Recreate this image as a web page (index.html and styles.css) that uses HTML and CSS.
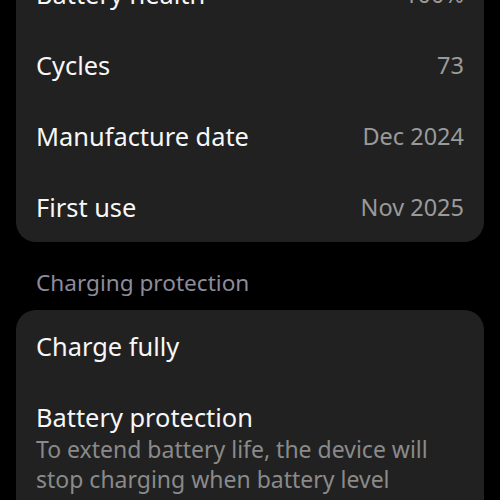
FILE: index.html
```html
<!DOCTYPE html>
<html lang="en">
<head>
  <meta charset="UTF-8">
  <meta name="viewport" content="width=device-width, initial-scale=1.0">
  <title>Battery</title>
  <link rel="stylesheet" href="styles.css">
</head>
<body>
  <div class="page">
    <div class="card card-info">
      <div class="row">
        <span class="label">Battery health</span>
        <span class="value">100%</span>
      </div>
      <div class="row">
        <span class="label">Cycles</span>
        <span class="value">73</span>
      </div>
      <div class="row">
        <span class="label">Manufacture date</span>
        <span class="value">Dec 2024</span>
      </div>
      <div class="row">
        <span class="label">First use</span>
        <span class="value">Nov 2025</span>
      </div>
    </div>

    <div class="section-title">Charging protection</div>

    <div class="card">
      <div class="row">
        <span class="label">Charge fully</span>
      </div>
      <div class="item">
        <div class="label">Battery protection</div>
        <div class="desc">To extend battery life, the device will stop charging when battery level reaches 80%.</div>
      </div>
    </div>
  </div>
</body>
</html>
```

FILE: styles.css
```css
body {
  background-color: #000000;
  color: #ffffff;
  font-family: 'Noto Sans', 'Roboto', sans-serif;
  margin: 0;
  padding: 0;
}

.page {
  padding: 0 16px;
}

.card {
  background-color: #212121;
  border-radius: 20px;
}

.card-info {
  margin-top: -42px;
}

.row {
  display: flex;
  justify-content: space-between;
  align-items: center;
  height: 71px;
  padding: 0 20px;
}

.label {
  font-size: 25.4px;
  line-height: 30px;
  color: #f7f7f7;
}

.value {
  font-size: 23.5px;
  color: #9a9a9a;
}

.section-title {
  padding: 28px 20px 14px;
  font-size: 22.6px;
  line-height: 26px;
  color: #8c8c9c;
}

.item {
  padding: 21px 20px 20px;
}

.desc {
  font-size: 23px;
  line-height: 30px;
  color: #8a8a8a;
  padding-top: 2px;
}
```
